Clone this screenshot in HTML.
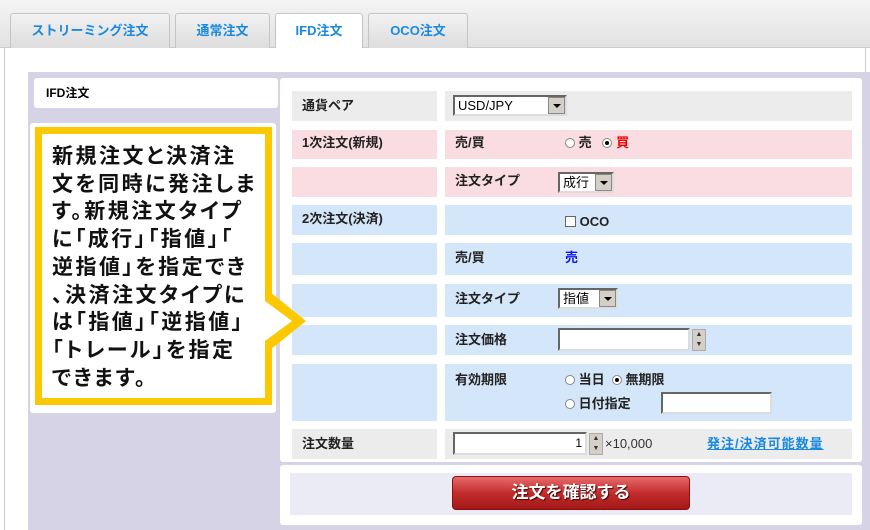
<!DOCTYPE html>
<html><head><meta charset="utf-8"><style>
*{margin:0;padding:0;box-sizing:border-box}
body{width:870px;height:530px;overflow:hidden;background:#fff;font-family:"Liberation Sans","Noto Sans CJK JP",sans-serif;position:relative}
.a{position:absolute}
.tabbar{left:0;top:0;width:870px;height:48px;background:linear-gradient(#f4f4f4,#e2e2e2);border-bottom:1px solid #ccc}
.tab{top:13px;height:36px;background:linear-gradient(#f2f2f2,#dcdcdc);border:1px solid #c4c4c4;border-bottom:none;border-radius:3px 3px 0 0;color:#1a8ae0;font-weight:bold;font-size:13px;text-align:center;line-height:34px}
.tab.act{background:#fff;height:37px}
.lbl{font-size:13px;font-weight:bold;color:#222;line-height:30px}
.cell{position:absolute}
.g{background:#ececec}.p{background:#f9dde2}.b{background:#d4e6f9}
.sel{position:absolute;background:#fff;border:2px solid;border-color:#666 #ddd #ddd #666;font-size:13px;line-height:17px;padding-left:3px}
.sel i{position:absolute;right:0;top:0;width:17px;height:17px;background:#d4d0c8;border:1px solid #888}
.sel i:after{content:"";position:absolute;left:4px;top:6px;border:4px solid transparent;border-top:4px solid #000}
.inp{position:absolute;background:#fff;border:2px solid;border-color:#666 #ddd #ddd #666}
.sp{position:absolute;width:14px;background:#d4d0c8;border:1px solid #aaa;font-size:7px;text-align:center;line-height:10px;color:#333}
.r{display:inline-block;width:10px;height:10px;border-radius:50%;border:1px solid #888;background:#fff;vertical-align:-1px;position:relative}
.r.on:after{content:"";position:absolute;left:2px;top:2px;width:4px;height:4px;border-radius:50%;background:#000}
</style></head><body>
<div class="a tabbar"></div>
<div class="a tab" style="left:10px;width:160px">ストリーミング注文</div>
<div class="a tab" style="left:175px;width:95px">通常注文</div>
<div class="a tab act" style="left:275px;width:88px">IFD注文</div>
<div class="a tab" style="left:368px;width:100px">OCO注文</div>
<div class="a" style="left:4px;top:48px;width:862px;height:482px;border-left:1px solid #ccc;border-right:1px solid #ccc;background:#fff"></div>
<div class="a" style="left:28px;top:72px;width:842px;height:458px;background:#d6d3e6"></div>
<div class="a" style="left:34px;top:78px;width:244px;height:30px;background:#fff;border-radius:3px;font-size:12px;font-weight:bold;line-height:30px;padding-left:12px">IFD注文</div>
<div class="a" style="left:30px;top:123px;width:246px;height:290px;background:#fff;border-radius:3px"></div>
<div class="a" style="left:35px;top:127px;width:237px;height:278px;border:7px solid #fcc800;background:#fff"></div>
<div class="a" style="left:52px;top:143px;font-size:21px;font-weight:bold;line-height:27.7px;letter-spacing:2.5px;font-feature-settings:'palt';color:#111;white-space:nowrap">新規注文と決済注<br>文を同時に発注しま<br>す。新規注文タイプ<br>に「成行」「指値」「<br>逆指値」を指定でき<br>、決済注文タイプに<br>は「指値」「逆指値」<br>「トレール」を指定<br>できます。</div>
<div class="a" style="left:280px;top:78px;width:582px;height:384px;background:#fff;border-radius:3px"></div>
<!-- rows -->
<div class="cell g lbl" style="left:292px;top:91px;width:145px;height:30px;padding-left:10px">通貨ペア</div>
<div class="cell g" style="left:445px;top:91px;width:407px;height:30px"></div>
<div class="sel" style="left:453px;top:95px;width:114px;height:21px">USD/JPY<i></i></div>
<div class="cell p lbl" style="left:292px;top:130px;width:145px;height:29px;padding-left:10px;line-height:26px">1次注文(新規)</div>
<div class="cell p lbl" style="left:445px;top:130px;width:407px;height:29px;padding-left:10px;line-height:26px">売/買<span style="position:absolute;left:120px;font-weight:bold"><span class="r"></span> 売 &nbsp; <span class="r on"></span> <span style="color:#e00">買</span></span></div>
<div class="cell p lbl" style="left:292px;top:167px;width:145px;height:30px"></div>
<div class="cell p lbl" style="left:445px;top:167px;width:407px;height:30px;padding-left:10px;line-height:28px">注文タイプ</div>
<div class="sel" style="left:558px;top:172px;width:56px;height:21px;font-weight:normal">成行<i></i></div>
<div class="cell b lbl" style="left:292px;top:205px;width:145px;height:30px;padding-left:10px;line-height:28px">2次注文(決済)</div>
<div class="cell b lbl" style="left:445px;top:205px;width:407px;height:30px"><span style="position:absolute;left:120px;top:2px;font-size:13px"><span style="display:inline-block;width:11px;height:11px;border:1px solid #666;background:#fff;vertical-align:-1px"></span> OCO</span></div>
<div class="cell b" style="left:292px;top:243px;width:145px;height:32px"></div>
<div class="cell b lbl" style="left:445px;top:243px;width:407px;height:32px;padding-left:10px">売/買<span style="position:absolute;left:120px;color:#11e">売</span></div>
<div class="cell b" style="left:292px;top:284px;width:145px;height:33px"></div>
<div class="cell b lbl" style="left:445px;top:284px;width:407px;height:33px;padding-left:10px">注文タイプ</div>
<div class="sel" style="left:558px;top:288px;width:60px;height:21px">指値<i></i></div>
<div class="cell b" style="left:292px;top:325px;width:145px;height:30px"></div>
<div class="cell b lbl" style="left:445px;top:325px;width:407px;height:30px;padding-left:10px">注文価格</div>
<div class="inp" style="left:558px;top:328px;width:132px;height:23px"></div>
<div class="sp" style="left:692px;top:329px;height:22px">▲<br>▼</div>
<div class="cell b" style="left:292px;top:364px;width:145px;height:57px"></div>
<div class="cell b lbl" style="left:445px;top:364px;width:407px;height:57px;padding-left:10px;line-height:32px">有効期限<span style="position:absolute;left:120px;top:2px;line-height:28px"><span class="r"></span> 当日 &nbsp;<span class="r on"></span> 無期限</span><span style="position:absolute;left:120px;top:30px;line-height:20px"><span class="r"></span> 日付指定</span></div>
<div class="inp" style="left:661px;top:392px;width:111px;height:22px"></div>
<div class="cell g lbl" style="left:292px;top:429px;width:145px;height:30px;padding-left:10px">注文数量</div>
<div class="cell g" style="left:445px;top:429px;width:407px;height:30px"></div>
<div class="inp" style="left:453px;top:432px;width:134px;height:23px;font-size:12px;text-align:right;padding-right:3px;line-height:19px">1</div>
<div class="sp" style="left:589px;top:433px;height:22px">▲<br>▼</div>
<div class="a" style="left:605px;top:436px;font-size:13px;color:#333">×10,000</div>
<div class="a" style="left:707px;top:433px;font-size:13px;color:#1a8ae0;text-decoration:underline;font-weight:bold;letter-spacing:1px">発注/決済可能数量</div>
<div class="a" style="left:280px;top:465px;width:582px;height:60px;background:#fff;border-radius:3px"></div>
<div class="a" style="left:290px;top:473px;width:562px;height:42px;background:#ebebf5"></div>
<div class="a" style="left:452px;top:476px;width:238px;height:34px;border-radius:4px;background:linear-gradient(#e86a6a,#c22c2c 50%,#a51818);border:1px solid #8a1010;color:#fff;font-weight:bold;font-size:17px;text-align:center;line-height:32px;text-shadow:1px 1px 1px #400">注文を確認する</div>
<svg class="a" style="left:262px;top:288px" width="50" height="66"><polygon points="8,4 44,33 8,62" fill="#fcc800"/><polygon points="3,13 30,33 3,53" fill="#fff"/></svg>
</body></html>
